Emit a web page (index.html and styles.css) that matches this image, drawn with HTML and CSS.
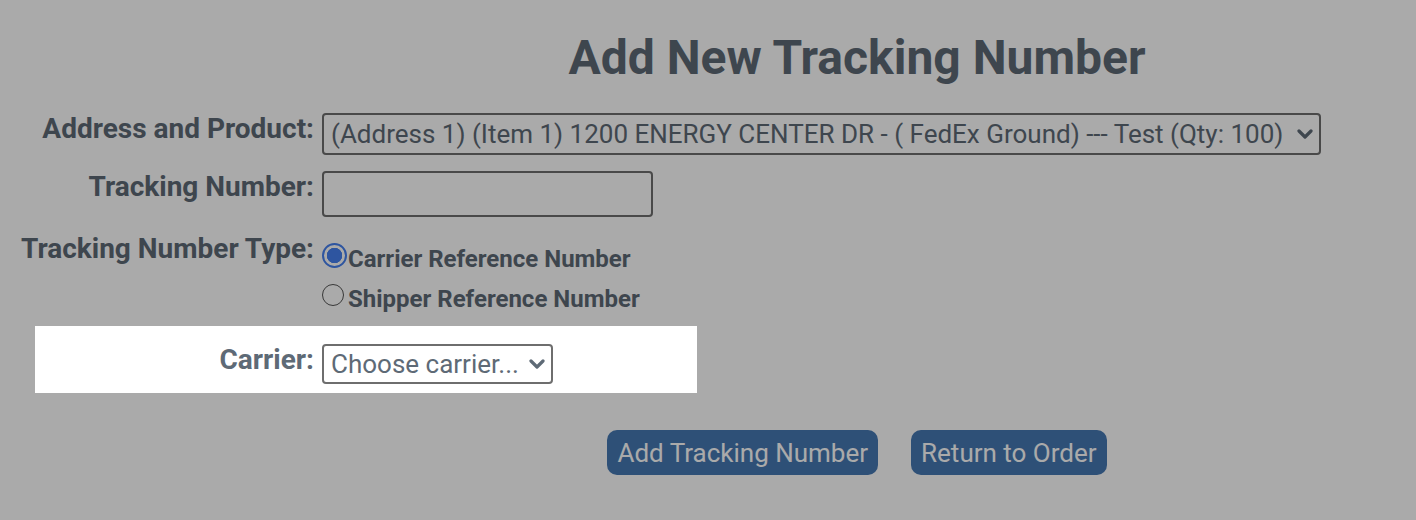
FILE: index.html
```html
<!DOCTYPE html>
<html lang="en">
<head>
    <meta charset="UTF-8">
    <meta name="viewport" content="width=device-width, initial-scale=1.0">
    <title>Add New Tracking Number</title>
    <link rel="stylesheet" href="styles.css">
</head>
<body>
    <h1 class="page-title">Add New Tracking Number</h1>

    <form class="tracking-form" onsubmit="return false;">
        <div class="form-row">
            <label class="form-label" for="address-product">Address and Product:</label>
            <div class="select-wrap">
                <select id="address-product" class="form-select select-wide">
                    <option>(Address 1) (Item 1) 1200 ENERGY CENTER DR - ( FedEx Ground) --- Test (Qty: 100)</option>
                </select>
                <svg class="select-arrow" viewBox="0 0 16 16" aria-hidden="true"><path d="M2 5 8 11l6-6" fill="none" stroke="currentColor" stroke-width="3.2" stroke-linecap="round" stroke-linejoin="round"/></svg>
            </div>
        </div>

        <div class="form-row">
            <label class="form-label" for="tracking-number">Tracking Number:</label>
            <div>
                <input id="tracking-number" class="form-input" type="text">
            </div>
        </div>

        <div class="form-row">
            <span class="form-label">Tracking Number Type:</span>
            <div class="radio-group">
                <label class="radio-option">
                    <input type="radio" name="number-type" value="carrier" checked>
                    <span>Carrier Reference Number</span>
                </label>
                <label class="radio-option">
                    <input type="radio" name="number-type" value="shipper">
                    <span>Shipper Reference Number</span>
                </label>
            </div>
        </div>

        <div class="form-row form-row--active">
            <label class="form-label" for="carrier">Carrier:</label>
            <div class="select-wrap">
                <select id="carrier" class="form-select select-carrier">
                    <option>Choose carrier...</option>
                    <option>FedEx</option>
                    <option>UPS</option>
                    <option>USPS</option>
                </select>
                <svg class="select-arrow" viewBox="0 0 16 16" aria-hidden="true"><path d="M2 5 8 11l6-6" fill="none" stroke="currentColor" stroke-width="3.2" stroke-linecap="round" stroke-linejoin="round"/></svg>
            </div>
        </div>

        <div class="form-actions">
            <button type="submit" class="btn">Add Tracking Number</button>
            <button type="button" class="btn">Return to Order</button>
        </div>
    </form>

    <!-- tour overlay, the active row sits above it -->
    <div class="tour-overlay"></div>
</body>
</html>
```

FILE: styles.css
```css
body {
    font-family: 'Roboto', 'Liberation Sans', sans-serif;
    background: #ffffff;
    color: #5e6a76;
    margin: 0;
}

.page-title {
    font-size: 48px;
    font-weight: 700;
    text-align: center;
    margin: 0;
    padding: 28px 0 0 298px;
    line-height: 60px;
}

.tracking-form {
    padding-top: 25px;
}

.form-row {
    display: grid;
    grid-template-columns: 314px 1fr;
    column-gap: 8px;
    align-items: start;
    margin-bottom: 16px;
}

.form-label {
    text-align: right;
    font-size: 28px;
    font-weight: 700;
    line-height: 32px;
}

/* row picked out by the tour */
.form-row--active {
    position: relative;
    z-index: 10;
    background: #ffffff;
    margin-left: 35px;
    width: 662px;
    grid-template-columns: 279px 1fr;
    padding: 18px 0 9px;
}

.select-wrap {
    position: relative;
    width: fit-content;
}

.form-select {
    appearance: none;
    -webkit-appearance: none;
    display: block;
    box-sizing: border-box;
    font-family: 'Roboto', 'Liberation Sans', sans-serif;
    font-size: 26px;
    color: #5e6a76;
    background: #ffffff;
    border: 2px solid #6e6e6e;
    border-radius: 4px;
    padding: 0 36px 0 7px;
    height: 42px;
    margin: 0;
}

.select-wide {
    width: 999px;
}

.select-carrier {
    width: 231px;
    height: 40px;
    padding-right: 20px;
}

.select-arrow {
    position: absolute;
    right: 8px;
    top: 50%;
    width: 16px;
    height: 16px;
    margin-top: -8px;
    color: #5e6a76;
    pointer-events: none;
}

.form-input {
    display: block;
    box-sizing: border-box;
    width: 331px;
    height: 46px;
    border: 2px solid #6e6e6e;
    border-radius: 4px;
    margin: 0;
    font-size: 24px;
    background: #ffffff;
}

.radio-group {
    display: flex;
    flex-direction: column;
    gap: 12px;
    padding-top: 12px;
    margin-bottom: -3px;
}

.radio-option {
    display: flex;
    align-items: flex-start;
    font-size: 24px;
    font-weight: 700;
    line-height: 28px;
}

.radio-option input {
    appearance: none;
    -webkit-appearance: none;
    flex: none;
    width: 22px;
    height: 22px;
    margin: -1px 4px 0 0;
    border: 1.5px solid #555555;
    border-radius: 50%;
    background: #ffffff;
    box-sizing: border-box;
}

.radio-option input:checked {
    width: 25px;
    height: 25px;
    margin: -2px 1px 0 0;
    border: 2px solid #4680f0;
    background: radial-gradient(circle, #4680f0 0 7.5px, #ffffff 8px);
}

.form-actions {
    display: flex;
    justify-content: center;
    gap: 33px;
    padding: 21px 0 0 298px;
}

.btn {
    font-family: 'Roboto', 'Liberation Sans', sans-serif;
    font-size: 26px;
    color: #ffffff;
    background-color: #4578b3;
    border: none;
    border-radius: 10px;
    height: 45px;
    padding: 0 10px;
    cursor: pointer;
}

.tour-overlay {
    position: fixed;
    inset: 0;
    background: rgba(0, 0, 0, 0.333);
    z-index: 5;
}
```
